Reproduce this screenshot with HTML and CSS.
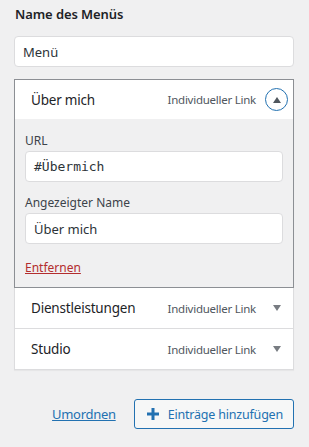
FILE: index.html
```html
<!DOCTYPE html>
<html lang="de">
  <head>
    <meta charset="UTF-8" />
    <meta name="viewport" content="width=device-width, initial-scale=1.0" />
    <title>Menü</title>
    <link rel="stylesheet" href="styles.css">
  </head>
  <body>
    <div class="menu-panel">
      <h2 class="panel-title">Name des Menüs</h2>
      <div class="text-input">Menü</div>

      <div class="menu-items">
        <div class="menu-item open">
          <div class="item-head">
            <span class="item-name">Über mich</span>
            <span class="item-type">Individueller Link</span>
            <span class="toggle-circle">
              <svg width="8" height="6" viewBox="0 0 8 6"><path d="M0 6 L4 0 L8 6 Z" fill="#50575e"/></svg>
            </span>
          </div>
          <div class="item-body">
            <div class="field">
              <label class="field-label">URL</label>
              <div class="text-input mono">#Übermich</div>
            </div>
            <div class="field">
              <label class="field-label">Angezeigter Name</label>
              <div class="text-input">Über mich</div>
            </div>
            <a class="delete-link" href="#">Entfernen</a>
          </div>
        </div>

        <div class="menu-item">
          <div class="item-head">
            <span class="item-name">Dienstleistungen</span>
            <span class="item-type">Individueller Link</span>
            <span class="toggle-arrow">
              <svg width="8" height="6" viewBox="0 0 8 6"><path d="M0 0 L8 0 L4 6 Z" fill="#787c82"/></svg>
            </span>
          </div>
        </div>

        <div class="menu-item">
          <div class="item-head">
            <span class="item-name">Studio</span>
            <span class="item-type">Individueller Link</span>
            <span class="toggle-arrow">
              <svg width="8" height="6" viewBox="0 0 8 6"><path d="M0 0 L8 0 L4 6 Z" fill="#787c82"/></svg>
            </span>
          </div>
        </div>
      </div>

      <div class="panel-actions">
        <a class="reorder-link" href="#">Umordnen</a>
        <button class="add-btn">
          <svg width="12" height="12" viewBox="0 0 12 12"><path d="M4.5 0 H7.5 V4.5 H12 V7.5 H7.5 V12 H4.5 V7.5 H0 V4.5 H4.5 Z" fill="#2271b1"/></svg>
          Einträge hinzufügen
        </button>
      </div>
    </div>
  </body>
</html>
```

FILE: styles.css
```css
* {
  margin: 0;
  padding: 0;
  box-sizing: border-box;
}

body {
  font-family: "Noto Sans", "Open Sans", sans-serif;
  background: #f0f0f1;
  color: #1d2327;
  font-size: 13px;
}

.menu-panel {
  width: 280px;
  margin-left: 14px;
  padding-top: 5px;
}

.panel-title {
  font-size: 13px;
  font-weight: 600;
  line-height: 18px;
  margin-left: 1px;
  margin-bottom: 13px;
  color: #1d2327;
  letter-spacing: -0.1px;
}

.text-input {
  height: 31px;
  background: #fff;
  border: 1px solid #dcdcde;
  border-radius: 4px;
  padding: 0 8px;
  display: flex;
  align-items: center;
  font-size: 13px;
  color: #2c3338;
}

.text-input.mono {
  font-family: "DejaVu Sans Mono", "Liberation Mono", monospace;
  font-size: 13px;
}

.menu-items {
  margin-top: 12px;
  box-shadow: 0 1px 1px rgba(0, 0, 0, 0.04);
}

.menu-item {
  border: 1px solid #dcdcde;
  border-top: none;
  background: #fff;
}

.menu-item.open {
  border: 1px solid #8c8f94;
}

.item-head {
  height: 40px;
  display: flex;
  align-items: center;
  padding: 0 5px 0 16px;
  background: #fff;
}

.menu-item.open .item-head {
  height: 39px;
}

.item-name {
  flex: 1;
  font-size: 13.5px;
  font-weight: 400;
  letter-spacing: -0.2px;
  color: #1d2327;
}

.item-type {
  font-size: 11.5px;
  letter-spacing: -0.25px;
  color: #50575e;
}

.toggle-circle {
  width: 23px;
  height: 23px;
  margin-left: 9px;
  border: 1.5px solid #2271b1;
  border-radius: 50%;
  display: flex;
  align-items: center;
  justify-content: center;
}

.toggle-arrow {
  width: 23px;
  margin-left: 9px;
  display: flex;
  justify-content: center;
}

.item-body {
  background: #f0f0f1;
  padding: 14px 10px 10px 10px;
}

.field + .field {
  margin-top: 13px;
}

.field-label {
  display: block;
  font-size: 12px;
  line-height: 16px;
  color: #3c434a;
  margin-bottom: 2px;
}

.delete-link {
  display: block;
  margin-top: 15px;
  font-size: 12px;
  line-height: 18px;
  color: #b32d2e;
  text-decoration: underline;
}

.panel-actions {
  display: flex;
  justify-content: flex-end;
  align-items: center;
  gap: 18px;
  margin-top: 29px;
}

.reorder-link {
  color: #2271b1;
  font-size: 13px;
  letter-spacing: -0.3px;
  text-decoration: underline;
}

.add-btn {
  height: 30px;
  padding: 0 10px 0 12px;
  display: flex;
  align-items: center;
  gap: 9px;
  background: #f6f7f7;
  border: 1px solid #2271b1;
  border-radius: 3px;
  color: #2271b1;
  font-family: inherit;
  font-size: 12.5px;
  letter-spacing: -0.2px;
}
```
